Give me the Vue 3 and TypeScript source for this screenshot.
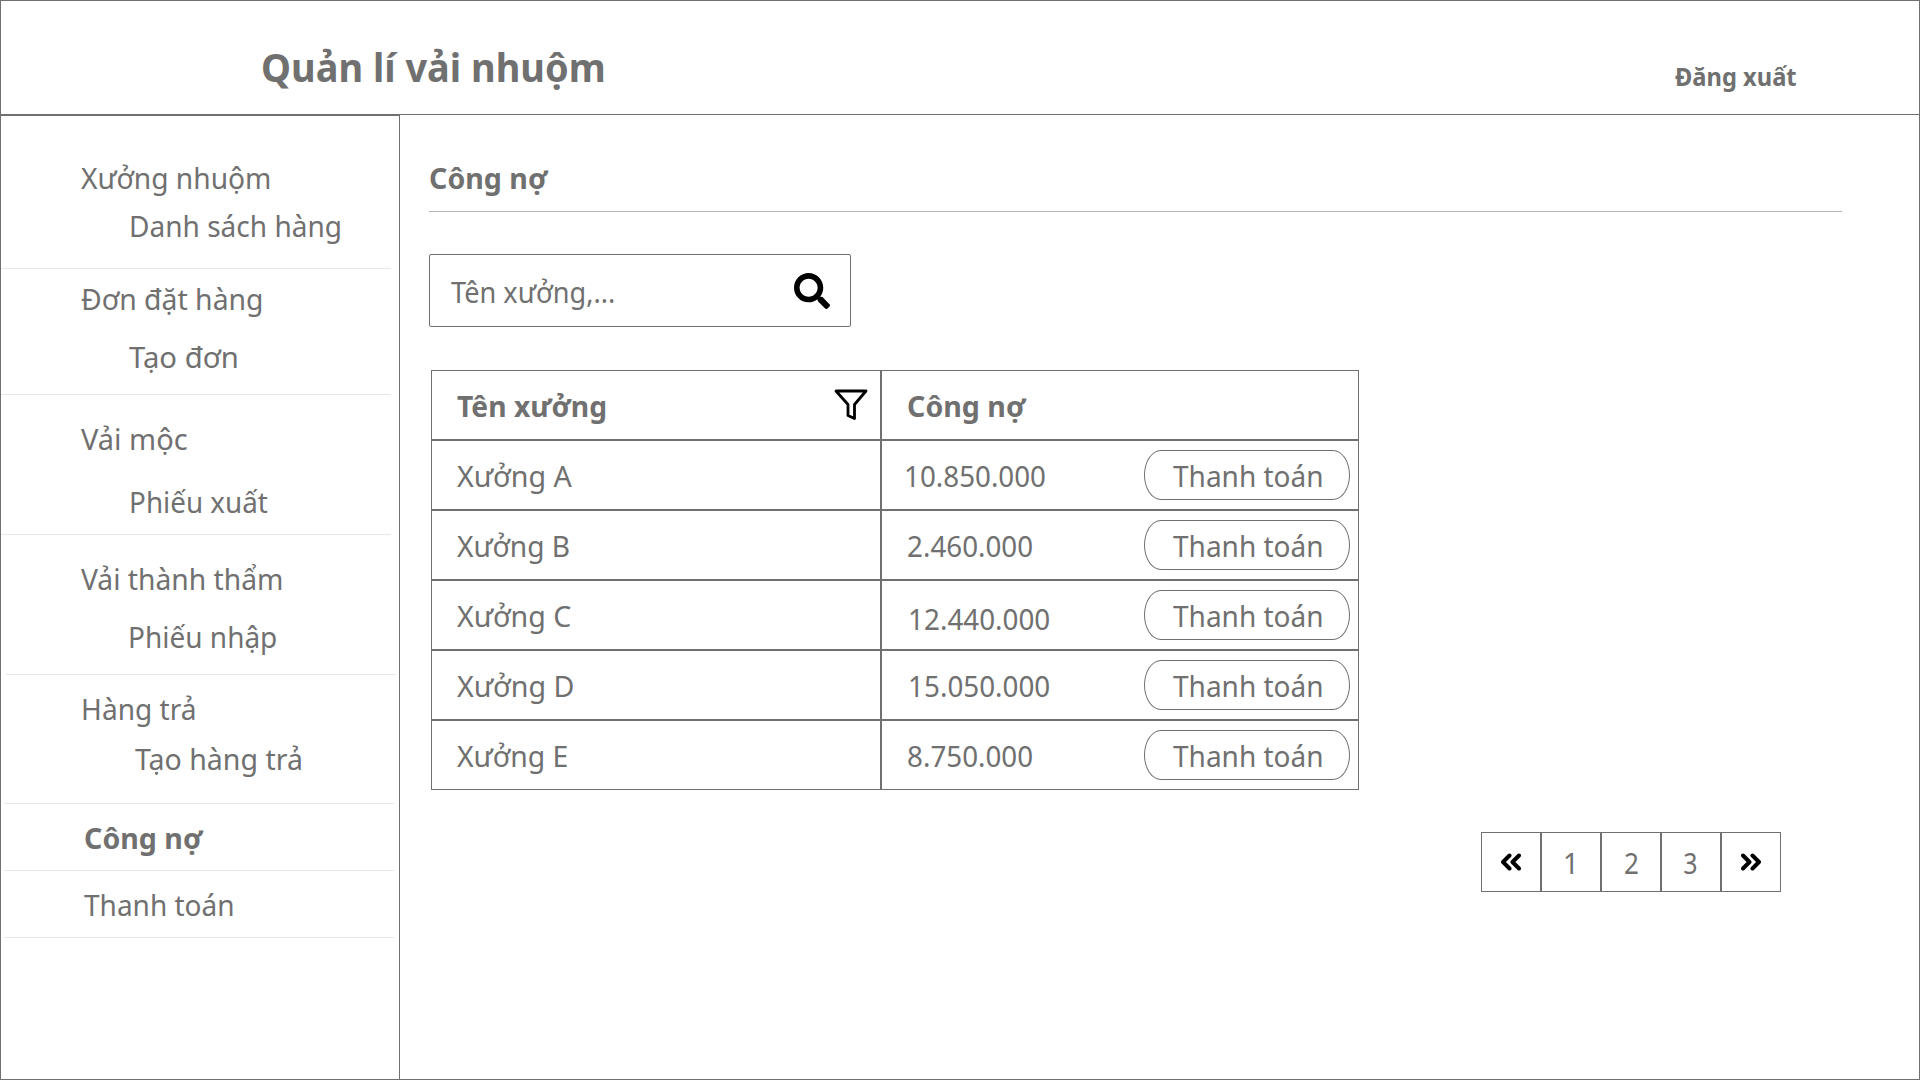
<script setup lang="ts">
interface Label { text: string; x: number; w: number; gap: number; bold?: boolean }
interface Group { items: Label[]; end: number; from: number; to: number }

const FAMILY = '"Noto Sans", "Open Sans", sans-serif'
const ctx = document.createElement('canvas').getContext('2d')!

// Condenses a label so that its visible glyphs span exactly `width` pixels.
function fit(text: string, width: number, size = 29.4, bold = false) {
  ctx.font = `${bold ? 700 : 400} ${size}px ${FAMILY}`
  const m = ctx.measureText(text)
  const scale = width / (m.actualBoundingBoxRight + m.actualBoundingBoxLeft)
  const shift = m.actualBoundingBoxLeft * scale
  return { transform: `translateX(${shift.toFixed(2)}px) scaleX(${scale.toFixed(4)})` }
}

const groups: Group[] = [
  { items: [{ text: 'Xưởng nhuộm', x: 80.7, w: 189, gap: 42 }, { text: 'Danh sách hàng', x: 130.7, w: 209, gap: 8 }], end: 22, from: 0, to: 390 },
  { items: [{ text: 'Đơn đặt hàng', x: 80.7, w: 180.5, gap: 10 }, { text: 'Tạo đơn', x: 129, w: 107.7, gap: 18 }], end: 17, from: 0, to: 390 },
  { items: [{ text: 'Vải mộc', x: 81, w: 106.5, gap: 24 }, { text: 'Phiếu xuất', x: 130.7, w: 136.3, gap: 23 }], end: 12, from: 0, to: 390 },
  { items: [{ text: 'Vải thành thẩm', x: 81, w: 201, gap: 24 }, { text: 'Phiếu nhập', x: 129.8, w: 146.3, gap: 18 }], end: 17, from: 5, to: 395 },
  { items: [{ text: 'Hàng trả', x: 82.7, w: 112, gap: 14 }, { text: 'Tạo hàng trả', x: 134.7, w: 166.5, gap: 10 }], end: 24, from: 3, to: 393 },
  { items: [{ text: 'Công nợ', x: 84.7, w: 118.3, gap: 14, bold: true }], end: 12, from: 3, to: 393 },
  { items: [{ text: 'Thanh toán', x: 83.8, w: 148.5, gap: 14 }], end: 12, from: 3, to: 393 },
]

const rows = [
  { name: 'Xưởng A', nw: 115, debt: '10.850.000', dx: 905.8, dw: 139.2, drop: 0 },
  { name: 'Xưởng B', nw: 112, debt: '2.460.000', dx: 908, dw: 124.3, drop: 0 },
  { name: 'Xưởng C', nw: 113.8, debt: '12.440.000', dx: 909.5, dw: 139.5, drop: 3 },
  { name: 'Xưởng D', nw: 116, debt: '15.050.000', dx: 909.5, dw: 139.5, drop: 0 },
  { name: 'Xưởng E', nw: 110, debt: '8.750.000', dx: 908, dw: 124.3, drop: 0 },
]

const pages = [
  { n: '1', w: 8.5, x: 24.3 },
  { n: '2', w: 13.3, x: 23.5 },
  { n: '3', w: 12.7, x: 23.3 },
]
</script>

<template>
  <div class="screen">
    <header class="top">
      <h1 class="label brand" :style="fit('Quản lí vải nhuộm', 340.5, 39.2, true)">Quản lí vải nhuộm</h1>
      <a class="label logout" :style="fit('Đăng xuất', 121, 24.5, true)">Đăng xuất</a>
    </header>
    <div class="body">
      <nav class="side">
        <section v-for="(g, i) in groups" :key="i" class="group">
          <div v-for="it in g.items" :key="it.text" class="item" :style="{ marginTop: it.gap + 'px', paddingLeft: it.x + 'px' }">
            <span class="label" :class="{ bold: it.bold }" :style="fit(it.text, it.w, 29.4, it.bold)">{{ it.text }}</span>
          </div>
          <div class="rule" :style="{ marginTop: g.end + 'px', marginLeft: g.from + 'px', width: g.to - g.from + 'px' }"></div>
        </section>
      </nav>
      <main class="main">
        <h2 class="label bold heading" :style="fit('Công nợ', 118.3, 29.4, true)">Công nợ</h2>
        <div class="divider"></div>
        <div class="search">
          <span class="label" :style="fit('Tên xưởng,...', 162.5, 29.4)">Tên xưởng,...</span>
          <svg class="glass" width="36" height="36" viewBox="0 0 512 512"><path d="M505 442.700L405.300 343c-4.500-4.500-10.600-7-17-7H372c27.600-35.300 44-79.700 44-128C416 93.100 322.900 0 208 0S0 93.100 0 208s93.100 208 208 208c48.300 0 92.700-16.400 128-44v16.300c0 6.400 2.500 12.500 7 17l99.700 99.700c9.400 9.400 24.600 9.400 33.900 0l28.300-28.300c9.400-9.400 9.400-24.600.1-34zM208 336c-70.700 0-128-57.200-128-128 0-70.700 57.200-128 128-128 70.700 0 128 57.200 128 128 0 70.700-57.200 128-128 128z" /></svg>
        </div>
        <div class="table">
          <div class="row">
            <div class="cell name">
              <span class="label bold" :style="fit('Tên xưởng', 148.5, 29.4, true)">Tên xưởng</span>
              <svg class="funnel" width="34" height="32" viewBox="0 0 34 32"><path d="M2 2H32L20.500 15.500V29.500L14 26.500V15.500Z" fill="none" stroke="#000" stroke-width="2.800" stroke-linejoin="round" /></svg>
            </div>
            <div class="cell debt head">
              <span class="label bold" :style="fit('Công nợ', 118.3, 29.4, true)">Công nợ</span>
            </div>
          </div>
          <div v-for="r in rows" :key="r.name" class="row">
            <div class="cell name"><span class="label" :style="fit(r.name, r.nw)">{{ r.name }}</span></div>
            <div class="cell debt" :style="{ paddingLeft: r.dx - 882 + 'px' }">
              <div :style="{ paddingTop: r.drop + 'px' }"><span class="label" :style="fit(r.debt, r.dw)">{{ r.debt }}</span></div>
              <button class="pay"><span class="label" :style="fit('Thanh toán', 148.5)">Thanh toán</span></button>
            </div>
          </div>
        </div>
        <div class="pager">
          <div class="page icon"><svg width="20" height="18" viewBox="0 0 20 18"><path d="M8.500 2.500L2 9L8.500 15.500M18 2.500L11.500 9L18 15.500" /></svg></div>
          <div v-for="p in pages" :key="p.n" class="page" :style="{ paddingLeft: p.x - 1 + 'px' }"><span class="label" :style="fit(p.n, p.w)">{{ p.n }}</span></div>
          <div class="page icon"><svg width="20" height="18" viewBox="0 0 20 18"><path d="M2 2.500L8.500 9L2 15.500M11.500 2.500L18 9L11.500 15.500" /></svg></div>
        </div>
      </main>
    </div>
  </div>
</template>

<style>
body { margin: 0; background: #fff; }
</style>

<style scoped>
* { box-sizing: border-box; }
.screen {
  width: 1920px; height: 1080px; overflow: hidden;
  display: flex; flex-direction: column;
  border: 1px solid #707070; border-top: 0;
  background: #fff; color: #707070;
  font-family: "Noto Sans", "Open Sans", sans-serif;
}
.label {
  display: block; width: max-content; margin: 0;
  font-size: 29.4px; font-weight: 400; line-height: 40px; height: 40px;
  white-space: nowrap; transform-origin: 0 50%;
}
.bold { font-weight: 700; }
.top {
  height: 115px; flex: none; display: flex; justify-content: space-between;
  border-top: 1px solid #707070; border-bottom: 1px solid #707070;
  padding: 0 0 0 262px;
}
.label.brand { font-size: 39.2px; font-weight: 700; line-height: 54px; height: 54px; margin-top: 39px; }
.label.logout { font-size: 24.5px; font-weight: 700; line-height: 34px; height: 34px; margin-top: 59px; width: 244px; }
.body { flex: 1; display: flex; min-height: 0; }
.side { width: 399px; border-top: 1px solid #707070; border-right: 1px solid #707070; }
.item { margin-left: -1px; }
.rule { height: 1px; background: #e8e8e8; }
.main { flex: 1; padding: 43px 0 0 29px; display: flex; flex-direction: column; align-items: flex-start; }
.label.heading { margin-left: 0.8px; }
.divider { width: 1413px; height: 1px; background: #b4b4b4; margin-top: 13px; }
.search {
  width: 422px; height: 73px; margin-top: 42px; border: 1px solid #707070; border-radius: 2px;
  display: flex; justify-content: space-between; align-items: flex-start; padding: 17px 20.500px 0 20.900px;
}
.glass { margin-top: 0.5px; }
.table { margin: 43px 0 0 2px; }
.row { display: flex; height: 70px; }
.cell { border: 1px solid #707070; display: flex; justify-content: space-between; height: 70px; padding-top: 15px; }
.cell.name { width: 450px; padding-left: 24.700px; padding-right: 12px; }
.cell.debt { width: 478px; padding-right: 8px; }
.cell.head { padding-left: 26.300px; }
.funnel { margin-top: 3.400px; }
.pay {
  width: 206px; height: 50px; margin-top: -6px; padding: 0 0 0 27.900px;
  border: 1px solid #707070; border-radius: 17px / 25px; background: #fff; color: inherit; font-family: inherit;
  display: flex; align-items: flex-start; justify-content: flex-start; text-align: left;
}
.pay .label { margin-top: 5px; }
.pager { display: flex; margin: 42px 0 0 1052px; }
.page { width: 60px; height: 60px; border: 1px solid #707070; padding-top: 10px; }
.page.icon { display: flex; justify-content: center; padding-top: 20px; }
.page path { fill: none; stroke: #000; stroke-width: 4; stroke-linecap: round; stroke-linejoin: round; }
</style>
